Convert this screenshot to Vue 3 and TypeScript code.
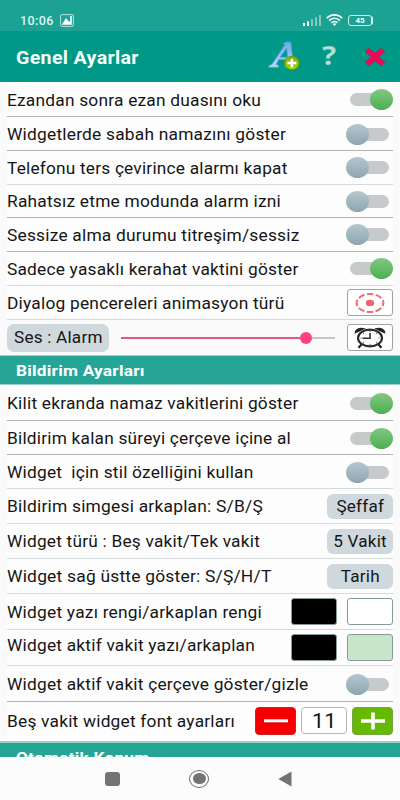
<script setup lang="ts">
interface Row {
  label: string
  height: number
  width: number
  kind: 'toggle' | 'spin' | 'chip' | 'colors' | 'stepper'
  on?: boolean
  value?: string
  fill?: string
  raised?: boolean
  thin?: boolean
}

const general: Row[] = [
  { label: 'Ezandan sonra ezan duasını oku', height: 35, width: 254, kind: 'toggle', on: true, thin: true },
  { label: 'Widgetlerde sabah namazını göster', height: 34, width: 279, kind: 'toggle', thin: true },
  { label: 'Telefonu ters çevirince alarmı kapat', height: 33.5, width: 280.5, kind: 'toggle' },
  { label: 'Rahatsız etme modunda alarm izni', height: 33.5, width: 274, kind: 'toggle', thin: true },
  { label: 'Sessize alma durumu titreşim/sessiz', height: 33.5, width: 292.5, kind: 'toggle', thin: true },
  { label: 'Sadece yasaklı kerahat vaktini göster', height: 34, width: 291.5, kind: 'toggle', on: true },
  { label: 'Diyalog pencereleri animasyon türü', height: 34, width: 277.5, kind: 'spin' },
]

const notification: Row[] = [
  { label: 'Kilit ekranda namaz vakitlerini göster', height: 36, width: 291.5, kind: 'toggle', on: true, thin: true },
  { label: 'Bildirim kalan süreyi çerçeve içine al', height: 34, width: 284, kind: 'toggle', on: true, thin: true },
  { label: 'Widget  için stil özelliğini kullan', height: 34, width: 246.5, kind: 'toggle' },
  { label: 'Bildirim simgesi arkaplan: S/B/Ş', height: 35, width: 256, kind: 'chip', value: 'Şeffaf' },
  { label: 'Widget türü : Beş vakit/Tek vakit', height: 35, width: 253, kind: 'chip', value: '5 Vakit' },
  { label: 'Widget sağ üstte göster: S/Ş/H/T', height: 35, width: 264.5, kind: 'chip', value: 'Tarih' },
  { label: 'Widget yazı rengi/arkaplan rengi', height: 36, width: 255, kind: 'colors', fill: 'white' },
  { label: 'Widget aktif vakit yazı/arkaplan', height: 36, width: 248, kind: 'colors', fill: 'green', raised: true },
  { label: 'Widget aktif vakit çerçeve göster/gizle', height: 36, width: 301.5, kind: 'toggle', thin: true },
  { label: 'Beş vakit widget font ayarları', height: 38.5, width: 228, kind: 'stepper' },
]

const sections = [
  { id: 'general', rows: general },
  { id: 'notification', rows: notification },
]
</script>

<template>
  <div class="screen">
    <div class="status">
      <span class="clock">10:06</span>
      <svg class="photo" viewBox="0 0 14 13">
        <rect x=".6" y=".6" width="12.8" height="11.8" rx="1.5" fill="none" stroke="#b5e2db" />
        <path d="M1.8 10.8 6 4l3 4 1.2-1V2h1.6v8.8z" fill="#fff" />
      </svg>
      <svg class="signal" viewBox="0 0 18 11">
        <rect x="0" y="8" width="2" height="3" fill="#fff" />
        <rect x="4" y="6.3" width="2" height="4.7" fill="#fff" />
        <g fill="#80cabf">
          <rect x="8" y="4.2" width="2" height="6.8" />
          <rect x="12" y="2.2" width="2" height="8.8" />
          <rect x="16" y="0" width="2" height="11" />
        </g>
      </svg>
      <svg class="wifi" viewBox="0 0 17 12">
        <g fill="none" stroke="#fff" stroke-width="1.6">
          <path d="M.8 4.3C5-.3 12-.3 16.2 4.3" />
          <path d="M3.1 6.6c3-3.2 7.8-3.2 10.8 0" />
          <path d="M5.5 8.8c1.7-1.7 4.3-1.7 6 0" />
        </g>
        <path d="M6.6 9.9q1.9-1.5 3.8 0L8.5 12z" fill="#fff" />
      </svg>
      <span class="battery">45</span>
    </div>

    <header class="bar">
      <h1>Genel Ayarlar</h1>
      <svg class="font-icon" viewBox="0 0 32 30">
        <defs>
          <linearGradient id="letter" x1="0" y1="0" x2="0" y2="1">
            <stop offset="0" stop-color="#65a9ea" />
            <stop offset="1" stop-color="#b5dcff" />
          </linearGradient>
          <linearGradient id="badge" x1="0" y1="0" x2="0" y2="1">
            <stop offset="0" stop-color="#87ac13" />
            <stop offset="1" stop-color="#9bdc00" />
          </linearGradient>
        </defs>
        <path d="M18.2 1h4.4l3 22.6 2 .8-.3 1.8H17l.3-1.8 2.8-.8-.6-5H10.7l-2.5 4.8 2.4.9-.3 2H.7l.3-1.8 2.8-1L17.2 3.5l-2-.8zM18.7 7l-6.6 9.2h7.4z" fill="url(#letter)" stroke="#5b9fdc" stroke-width=".9" fill-rule="evenodd" />
        <ellipse cx="23.9" cy="22" rx="7.3" ry="6.8" fill="url(#badge)" stroke="#63900b" stroke-width=".8" />
        <path d="M23.9 17.7v8.6M19.4 22h9" stroke="#fff" stroke-width="2.5" />
      </svg>
      <span class="help">?</span>
      <svg class="close" viewBox="0 0 22 20">
        <path d="M4.6 1.2 11 6.1l6.4-4.9L21 4.7 14.5 10l6.5 5.3-3.6 3.5L11 13.9l-6.4 4.9L1 15.3 7.5 10 1 4.7z" fill="#f5055a" stroke="#8b3652" stroke-width=".8" />
      </svg>
    </header>

    <main class="content">
      <section v-for="section in sections" :key="section.id">
        <h2 v-if="section.id === 'notification'" class="heading"><span>Bildirim Ayarları</span></h2>
        <div
          v-for="row in section.rows"
          :key="row.label"
          class="row"
          :class="['row-' + row.kind, { thin: row.thin, raised: row.raised }]"
          :style="{ height: row.height + 'px' }"
        >
          <svg class="label" :width="row.width + 4" height="24">
            <text x="0" y="18" :textLength="row.width" lengthAdjust="spacingAndGlyphs">{{ row.label }}</text>
          </svg>

          <span v-if="row.kind === 'toggle'" class="switch" :class="{ on: row.on }"><i></i></span>

          <span v-else-if="row.kind === 'spin'" class="frame">
            <svg viewBox="0 0 30 22" width="30" height="22">
              <ellipse cx="15" cy="11" rx="13.4" ry="9" fill="none" stroke="#ef6c79" stroke-width="2" stroke-dasharray="6.4 2.45" stroke-dashoffset="3.2" />
              <ellipse cx="15" cy="11" rx="4.2" ry="3.2" fill="#f65f70" />
            </svg>
          </span>

          <span v-else-if="row.kind === 'chip'" class="chip"><b>{{ row.value }}</b></span>

          <template v-else-if="row.kind === 'colors'">
            <span class="swatch black"></span>
            <span class="swatch" :class="row.fill"></span>
          </template>

          <template v-else>
            <button class="step minus" aria-label="−"><svg viewBox="0 0 26 20"><path d="M1 9.8h24" stroke="#fff" stroke-width="3" /></svg></button>
            <span class="number"><b>11</b></span>
            <button class="step plus" aria-label="+"><svg viewBox="0 0 26 20"><path d="M1 10h24M13 1.5v17" stroke="#fff" stroke-width="3.6" /></svg></button>
          </template>
        </div>

        <div v-if="section.id === 'general'" class="volume">
          <span class="chip sound"><b>Ses : Alarm</b></span>
          <span class="slider"><i class="filled"></i><i class="thumb"></i><i class="rest"></i></span>
          <span class="frame">
            <svg viewBox="0 0 32 22" width="32" height="22">
              <ellipse cx="16" cy="11" rx="12" ry="8.4" fill="none" stroke="#2a2a2a" stroke-width="2.1" />
              <path d="M16 6v5.2H8.5" fill="none" stroke="#333" stroke-width="1.6" />
              <path d="M1.8 5.2C2 2.6 5.5 1.2 8.8 1.9zM30.2 5.2C30 2.6 26.5 1.2 23.2 1.9z" fill="#222" stroke="#222" stroke-width="2" />
              <path d="m7.5 17.5-3 3.2M24.5 17.5l3 3.2" stroke="#222" stroke-width="2.2" />
              <path d="M16 4v1M16 17v1M6.5 11h1M24.5 11h1M9 6l1 .7M23 6l-1 .7M9 16l1-.7M23 16l-1-.7" stroke="#555" />
            </svg>
          </span>
        </div>
      </section>
      <h2 class="heading cut"><span>Otomatik Konum</span></h2>
    </main>

    <nav class="nav">
      <i class="recent"></i>
      <i class="home"></i>
      <svg class="back" viewBox="0 0 14 16"><path d="M13.5.5v15L.3 8z" fill="#737373" /></svg>
    </nav>
  </div>
</template>

<style>
body { background: #fafafa; }
</style>

<style scoped>
* { box-sizing: border-box; }
.screen {
  width: 400px;
  height: 800px;
  overflow: hidden;
  display: flex;
  flex-direction: column;
  background: #fafafa;
  font-family: Roboto, "Liberation Sans", sans-serif;
  color: #151515;
}
.status {
  flex: none;
  height: 31px;
  padding: 9px 28px 0 20px;
  background: #1ca293;
  display: flex;
  align-items: center;
}
.clock { color: #dff6f2; font-size: 12.5px; font-weight: 500; letter-spacing: .4px; width: 40px; padding-top: 1px; }
.photo { width: 14px; height: 13px; }
.signal { width: 18px; height: 11px; margin-left: auto; }
.wifi { width: 17px; height: 12px; margin-left: 5px; }
.battery {
  width: 24px;
  height: 11px;
  margin-left: 5px;
  border: 1.3px solid #d6f2ed;
  border-radius: 3px;
  color: #fff;
  font-size: 8px;
  font-weight: 700;
  line-height: 9px;
  text-align: center;
  box-shadow: 2px 0 0 -1px #d6f2ed;
}
.bar {
  flex: none;
  height: 51px;
  padding: 0 14px 0 16px;
  background: #009886;
  display: flex;
  align-items: center;
}
h1 {
  margin: 2px auto 0 0;
  font-size: 18px;
  line-height: 24px;
  font-weight: 700;
  letter-spacing: .3px;
  color: #f4fffc;
  transform: scaleX(1.09);
  transform-origin: left;
}
.font-icon { width: 32px; height: 30px; margin-top: -2px; }
.help {
  width: 16px;
  margin: -3px 27px 0 21px;
  color: #b2dfdb;
  font: 700 27px/30px "Open Sans", sans-serif;
  text-align: center;
  -webkit-text-stroke: .3px #6fa8a0;
  transform: scaleX(1.1);
}
.close { width: 22px; height: 20px; }
.content { flex: none; height: 675px; overflow: hidden; }
.row {
  margin: 0 7px;
  padding-top: 1px;
  border-bottom: 1.5px solid #d4d9d9;
  background: #fdfdfd;
  display: flex;
  align-items: center;
}
.row.thin { border-bottom: 1px solid #afb3b3; }
.row.row-stepper { border-bottom: 0; padding: 0 0 1px; }
.row.row-colors, .row.row-chip { padding-top: 0; }
.label { flex: none; display: block; margin-right: auto; }
.raised .label { margin-bottom: 5px; }
.label text { font-size: 16px; letter-spacing: .2px; fill: #151515; white-space: pre; }
.switch {
  flex: none;
  width: 47px;
  height: 22px;
  padding-left: 6px;
  display: flex;
  align-items: center;
}
.switch::before { content: ""; flex: none; width: 37px; height: 13px; border-radius: 7px; background: #c7caca; }
.switch i {
  flex: none;
  width: 23px;
  height: 21px;
  margin-left: -43px;
  border-radius: 50%;
  background: linear-gradient(#b4c7cf, #8ea5b0);
}
.switch.on { padding-left: 4px; }
.switch.on i { margin-left: -17px; background: linear-gradient(#81c784, #4caf50); }
.frame {
  flex: none;
  width: 46px;
  height: 27px;
  border: 1px solid #a0a3a4;
  border-radius: 3px;
  background: #fff;
  display: flex;
  align-items: center;
  justify-content: center;
}
.chip {
  flex: none;
  width: 66px;
  height: 25px;
  border-radius: 6px;
  background: #cfd8dd;
  display: flex;
  align-items: center;
  justify-content: center;
}
.chip b { font-weight: 400; font-size: 16px; letter-spacing: .2px; line-height: 20px; transform: scaleX(1.07); white-space: nowrap; padding-top: 1px; }
.swatch { width: 46px; height: 27px; margin-left: 10px; border: 1px solid #89989b; border-radius: 3px; }
.black { background: #000; }
.white { background: #fff; }
.green { background: #c8e6c9; }
.volume { height: 36px; margin: 0 7px; display: flex; align-items: center; }
.sound { width: 102px; height: 28px; border-radius: 7px; }
.slider { width: 214px; margin: 0 12px; display: flex; align-items: center; }
.filled { width: 179px; height: 2px; background: #e5558c; }
.thumb { width: 12px; height: 12px; border-radius: 50%; background: #ff4081; }
.rest { width: 23px; height: 2px; background: #c6c6c6; }
.heading {
  height: 30px;
  margin: -.5px 0 0;
  padding: 3px 16px 0;
  border: solid #9bd0c8;
  border-width: 1px 0;
  background: #26a597;
  color: #fff;
  font-size: 15.5px;
  line-height: 24px;
  font-weight: 700;
}
.heading span { display: inline-block; letter-spacing: .2px; transform: scaleX(1.115); transform-origin: left; }
.cut { margin: 0; border-top-width: 2px; padding-top: 3px; }
.number { width: 46px; height: 27px; margin: 0 5px; border: 1.5px solid #b7b7b7; border-radius: 4px; background: #fff; display: flex; align-items: center; justify-content: center; }
.number b { font-weight: 400; font-size: 20px; line-height: 22px; transform: scaleX(1.08); }
.step { width: 41px; height: 28px; padding: 0; border: 1px solid; border-radius: 4px; display: flex; align-items: center; justify-content: center; }
.step svg { width: 26px; height: 20px; }
.minus { background: #f50000; border-color: #cc2222; }
.plus { background: #66b800; border-color: #75a644; }
.nav { flex: 1; background: #fcfcfc; padding-left: 105px; display: flex; align-items: center; }
.recent { width: 15px; height: 14px; border-radius: 3px; background: #737373; }
.home { width: 20px; height: 18px; margin-left: 69px; border: 1.5px solid #6c6c6c; border-radius: 50%; padding: 2.5px; }
.home::before { content: ""; display: block; width: 100%; height: 100%; border-radius: 50%; background: #737373; }
.back { width: 14px; height: 16px; margin-left: 69px; }
</style>
